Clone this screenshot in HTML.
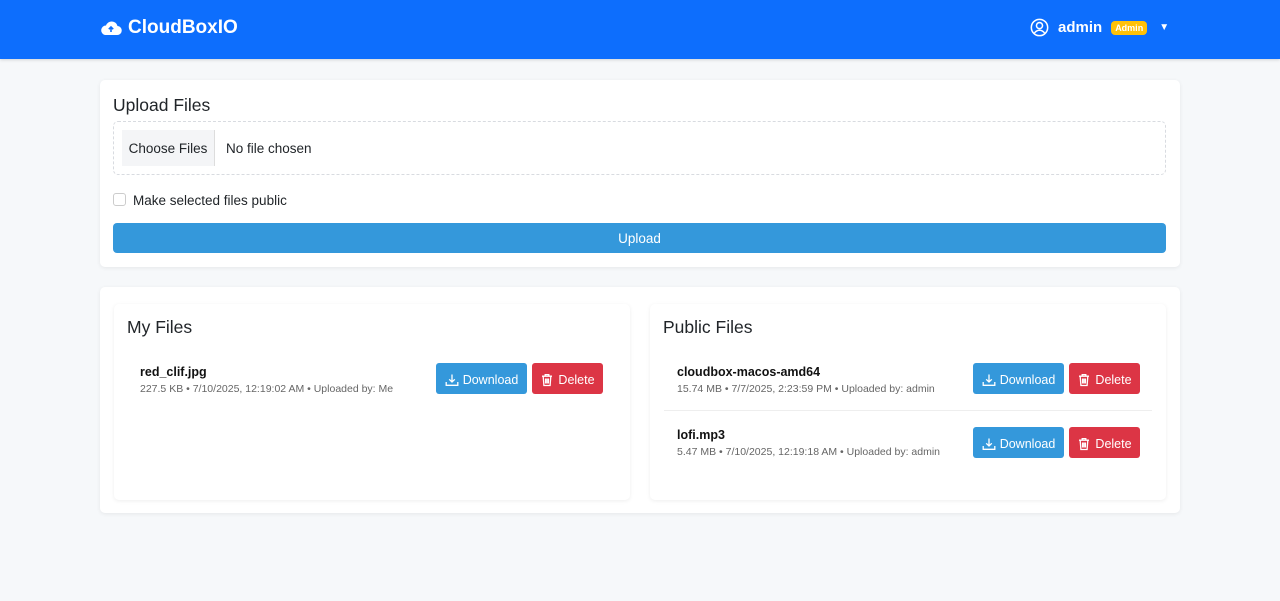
<!DOCTYPE html>
<html><head><meta charset="utf-8"><style>
*{box-sizing:border-box;margin:0;padding:0}
body{width:1280px;height:601px;background:#f6f8fa;font-family:"Liberation Sans",sans-serif;color:#212529;position:relative;overflow:hidden}
.nav{position:absolute;left:0;top:0;width:1280px;height:59px;background:#0d6efd;box-shadow:0 1px 3px rgba(0,0,0,.15)}
.brand{position:absolute;left:100px;top:17px;color:#fff;font-size:19px;font-weight:bold;display:flex;align-items:center;gap:6px}
.user{position:absolute;left:1030px;top:18px;color:#fff;font-size:15px;font-weight:bold;display:flex;align-items:center}
.badge{background:#ffc107;color:#fff;font-size:9px;font-weight:bold;padding:2px 4px;border-radius:4px;margin-left:9px}
.card{position:absolute;background:#fff;border-radius:5px;box-shadow:0 1px 4px rgba(0,0,0,.07)}
.a{position:absolute}
h5{font-size:17.5px;font-weight:normal;color:#212529}
.btn{position:absolute;height:31px;color:#fff;font-size:12.5px;border-radius:3px;display:flex;align-items:center;justify-content:center;gap:4px;padding-top:2px}
.dl{background:#3498db}.del{background:#dc3545}
.name{font-size:12.5px;font-weight:bold;color:#111}
.meta{font-size:10.5px;color:#666}
</style></head><body>
<div class="nav">
 <div class="brand"><svg width="22" height="16" viewBox="0 0 22 16"><path d="M5 15h12a4.5 4.5 0 0 0 .5-9A6 6 0 0 0 6 5.5 4.8 4.8 0 0 0 5 15z" fill="#fff"/><path d="M11 12V7M8.8 9.2 11 7l2.2 2.2" stroke="#0d6efd" stroke-width="1.6" fill="none"/></svg>CloudBoxIO</div>
 <div class="user"><svg width="19" height="19" viewBox="0 0 20 20"><circle cx="10" cy="10" r="8.6" fill="none" stroke="#fff" stroke-width="1.6"/><circle cx="10" cy="8" r="3.2" fill="none" stroke="#fff" stroke-width="1.6"/><path d="M4.5 16.2c1.5-2.4 3.4-3.3 5.5-3.3s4 .9 5.5 3.3" fill="none" stroke="#fff" stroke-width="1.6"/></svg><span style="margin-left:9px">admin</span><span class="badge">Admin</span><span style="margin-left:12px;font-size:10px">▼</span></div>
</div>
<div class="card" style="left:100px;top:80px;width:1080px;height:187px">
 <h5 class="a" style="left:13px;top:15px">Upload Files</h5>
 <div class="a" style="left:13px;top:41px;width:1053px;height:54px;border:1.5px dashed #d8dbe0;border-radius:5px"></div>
 <div class="a" style="left:22px;top:50px;width:93px;height:36px;background:#f4f5f7;border-right:1px solid #ddd;font-size:13.5px;line-height:37px;text-align:center">Choose Files</div>
 <div class="a" style="left:126px;top:61px;font-size:13.5px">No file chosen</div>
 <div class="a" style="left:13px;top:113px;width:13px;height:13px;border:1px solid #ccc;border-radius:3px"></div>
 <div class="a" style="left:33px;top:113px;font-size:13.5px">Make selected files public</div>
 <div class="a" style="left:13px;top:143px;width:1053px;height:30px;background:#3498db;border-radius:4px;color:#fff;font-size:13.5px;line-height:32px;text-align:center">Upload</div>
</div>
<div class="card" style="left:100px;top:287px;width:1080px;height:226px"></div>

<svg width="0" height="0" style="position:absolute"><defs>
<symbol id="d" viewBox="0 0 14 14"><path d="M7 1.5v7.5M4.2 6.3 7 9l2.8-2.7M1.2 9v3.3h11.6V9" fill="none" stroke="#fff" stroke-width="1.3"/></symbol>
<symbol id="t" viewBox="0 0 14 14"><path d="M2 3.2h10M5.2 3V1.6h3.6V3M3.2 3.5l.7 9h6.2l.7-9M5.6 5.5v5M7 5.5v5M8.4 5.5v5" fill="none" stroke="#fff" stroke-width="1.3"/></symbol>
</defs></svg>

<div class="card" style="left:114px;top:304px;width:516px;height:196px">
 <h5 class="a" style="left:13px;top:13px">My Files</h5>
 <div class="a name" style="left:26px;top:61px">red_clif.jpg</div>
 <div class="a meta" style="left:26px;top:79px">227.5 KB • 7/10/2025, 12:19:02 AM • Uploaded by: Me</div>
 <div class="btn dl" style="left:322px;top:59px;width:91px"><svg width="14" height="14"><use href="#d"/></svg>Download</div>
 <div class="btn del" style="left:418px;top:59px;width:71px"><svg width="14" height="14"><use href="#t"/></svg>Delete</div>
</div>
<div class="card" style="left:650px;top:304px;width:516px;height:196px">
 <h5 class="a" style="left:13px;top:13px">Public Files</h5>
 <div class="a name" style="left:27px;top:61px">cloudbox-macos-amd64</div>
 <div class="a meta" style="left:27px;top:79px">15.74 MB • 7/7/2025, 2:23:59 PM • Uploaded by: admin</div>
 <div class="btn dl" style="left:323px;top:59px;width:91px"><svg width="14" height="14"><use href="#d"/></svg>Download</div>
 <div class="btn del" style="left:419px;top:59px;width:71px"><svg width="14" height="14"><use href="#t"/></svg>Delete</div>
 <div class="a" style="left:14px;top:106px;width:488px;height:1px;background:#eee"></div>
 <div class="a name" style="left:27px;top:124px">lofi.mp3</div>
 <div class="a meta" style="left:27px;top:142px">5.47 MB • 7/10/2025, 12:19:18 AM • Uploaded by: admin</div>
 <div class="btn dl" style="left:323px;top:123px;width:91px"><svg width="14" height="14"><use href="#d"/></svg>Download</div>
 <div class="btn del" style="left:419px;top:123px;width:71px"><svg width="14" height="14"><use href="#t"/></svg>Delete</div>
</div>
</body></html>
